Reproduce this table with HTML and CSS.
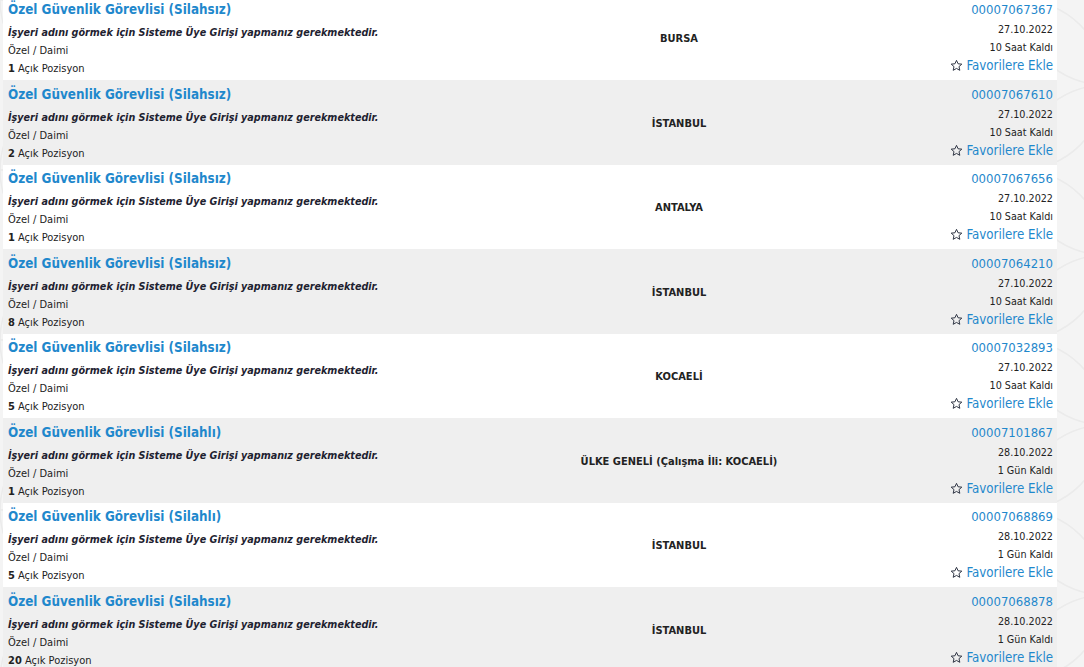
FILE: index.html
```html
<!DOCTYPE html>
<html lang="tr">
<head>
<meta charset="utf-8">
<title>İlanlar</title>
<link rel="stylesheet" href="styles.css">
</head>
<body>
<div class="list">
  <div class="row">
    <div class="info">
      <a class="title">Özel Güvenlik Görevlisi (Silahsız)</a>
      <div class="notice">İşyeri adını görmek için Sisteme Üye Girişi yapmanız gerekmektedir.</div>
      <div class="meta">Özel / Daimi</div>
      <div class="meta"><b>1</b> Açık Pozisyon</div>
    </div>
    <div class="city">BURSA</div>
    <div class="side">
      <a class="code">00007067367</a>
      <div class="small">27.10.2022</div>
      <div class="small">10 Saat Kaldı</div>
      <a class="fav"><svg class="star" viewBox="0 0 24 24"><path d="M12 2.5l2.9 6.3 6.9.7-5.2 4.6 1.5 6.8L12 17.4l-6.1 3.5 1.5-6.8-5.2-4.6 6.9-.7z"/></svg>Favorilere Ekle</a>
    </div>
  </div>
  <div class="row alt">
    <div class="info">
      <a class="title">Özel Güvenlik Görevlisi (Silahsız)</a>
      <div class="notice">İşyeri adını görmek için Sisteme Üye Girişi yapmanız gerekmektedir.</div>
      <div class="meta">Özel / Daimi</div>
      <div class="meta"><b>2</b> Açık Pozisyon</div>
    </div>
    <div class="city">İSTANBUL</div>
    <div class="side">
      <a class="code">00007067610</a>
      <div class="small">27.10.2022</div>
      <div class="small">10 Saat Kaldı</div>
      <a class="fav"><svg class="star" viewBox="0 0 24 24"><path d="M12 2.5l2.9 6.3 6.9.7-5.2 4.6 1.5 6.8L12 17.4l-6.1 3.5 1.5-6.8-5.2-4.6 6.9-.7z"/></svg>Favorilere Ekle</a>
    </div>
  </div>
  <div class="row">
    <div class="info">
      <a class="title">Özel Güvenlik Görevlisi (Silahsız)</a>
      <div class="notice">İşyeri adını görmek için Sisteme Üye Girişi yapmanız gerekmektedir.</div>
      <div class="meta">Özel / Daimi</div>
      <div class="meta"><b>1</b> Açık Pozisyon</div>
    </div>
    <div class="city">ANTALYA</div>
    <div class="side">
      <a class="code">00007067656</a>
      <div class="small">27.10.2022</div>
      <div class="small">10 Saat Kaldı</div>
      <a class="fav"><svg class="star" viewBox="0 0 24 24"><path d="M12 2.5l2.9 6.3 6.9.7-5.2 4.6 1.5 6.8L12 17.4l-6.1 3.5 1.5-6.8-5.2-4.6 6.9-.7z"/></svg>Favorilere Ekle</a>
    </div>
  </div>
  <div class="row alt">
    <div class="info">
      <a class="title">Özel Güvenlik Görevlisi (Silahsız)</a>
      <div class="notice">İşyeri adını görmek için Sisteme Üye Girişi yapmanız gerekmektedir.</div>
      <div class="meta">Özel / Daimi</div>
      <div class="meta"><b>8</b> Açık Pozisyon</div>
    </div>
    <div class="city">İSTANBUL</div>
    <div class="side">
      <a class="code">00007064210</a>
      <div class="small">27.10.2022</div>
      <div class="small">10 Saat Kaldı</div>
      <a class="fav"><svg class="star" viewBox="0 0 24 24"><path d="M12 2.5l2.9 6.3 6.9.7-5.2 4.6 1.5 6.8L12 17.4l-6.1 3.5 1.5-6.8-5.2-4.6 6.9-.7z"/></svg>Favorilere Ekle</a>
    </div>
  </div>
  <div class="row">
    <div class="info">
      <a class="title">Özel Güvenlik Görevlisi (Silahsız)</a>
      <div class="notice">İşyeri adını görmek için Sisteme Üye Girişi yapmanız gerekmektedir.</div>
      <div class="meta">Özel / Daimi</div>
      <div class="meta"><b>5</b> Açık Pozisyon</div>
    </div>
    <div class="city">KOCAELİ</div>
    <div class="side">
      <a class="code">00007032893</a>
      <div class="small">27.10.2022</div>
      <div class="small">10 Saat Kaldı</div>
      <a class="fav"><svg class="star" viewBox="0 0 24 24"><path d="M12 2.5l2.9 6.3 6.9.7-5.2 4.6 1.5 6.8L12 17.4l-6.1 3.5 1.5-6.8-5.2-4.6 6.9-.7z"/></svg>Favorilere Ekle</a>
    </div>
  </div>
  <div class="row alt">
    <div class="info">
      <a class="title">Özel Güvenlik Görevlisi (Silahlı)</a>
      <div class="notice">İşyeri adını görmek için Sisteme Üye Girişi yapmanız gerekmektedir.</div>
      <div class="meta">Özel / Daimi</div>
      <div class="meta"><b>1</b> Açık Pozisyon</div>
    </div>
    <div class="city">ÜLKE GENELİ (Çalışma İli: KOCAELİ)</div>
    <div class="side">
      <a class="code">00007101867</a>
      <div class="small">28.10.2022</div>
      <div class="small">1 Gün Kaldı</div>
      <a class="fav"><svg class="star" viewBox="0 0 24 24"><path d="M12 2.5l2.9 6.3 6.9.7-5.2 4.6 1.5 6.8L12 17.4l-6.1 3.5 1.5-6.8-5.2-4.6 6.9-.7z"/></svg>Favorilere Ekle</a>
    </div>
  </div>
  <div class="row">
    <div class="info">
      <a class="title">Özel Güvenlik Görevlisi (Silahlı)</a>
      <div class="notice">İşyeri adını görmek için Sisteme Üye Girişi yapmanız gerekmektedir.</div>
      <div class="meta">Özel / Daimi</div>
      <div class="meta"><b>5</b> Açık Pozisyon</div>
    </div>
    <div class="city">İSTANBUL</div>
    <div class="side">
      <a class="code">00007068869</a>
      <div class="small">28.10.2022</div>
      <div class="small">1 Gün Kaldı</div>
      <a class="fav"><svg class="star" viewBox="0 0 24 24"><path d="M12 2.5l2.9 6.3 6.9.7-5.2 4.6 1.5 6.8L12 17.4l-6.1 3.5 1.5-6.8-5.2-4.6 6.9-.7z"/></svg>Favorilere Ekle</a>
    </div>
  </div>
  <div class="row alt">
    <div class="info">
      <a class="title">Özel Güvenlik Görevlisi (Silahsız)</a>
      <div class="notice">İşyeri adını görmek için Sisteme Üye Girişi yapmanız gerekmektedir.</div>
      <div class="meta">Özel / Daimi</div>
      <div class="meta"><b>20</b> Açık Pozisyon</div>
    </div>
    <div class="city">İSTANBUL</div>
    <div class="side">
      <a class="code">00007068878</a>
      <div class="small">28.10.2022</div>
      <div class="small">1 Gün Kaldı</div>
      <a class="fav"><svg class="star" viewBox="0 0 24 24"><path d="M12 2.5l2.9 6.3 6.9.7-5.2 4.6 1.5 6.8L12 17.4l-6.1 3.5 1.5-6.8-5.2-4.6 6.9-.7z"/></svg>Favorilere Ekle</a>
    </div>
  </div>
</div>
</body>
</html>
```

FILE: styles.css
```css
html, body {
  margin: 0;
  padding: 0;
}
body {
  background-color: #f4f4f4;
  background-image: url("data:image/svg+xml;utf8,<svg xmlns='http://www.w3.org/2000/svg' width='170' height='170'><g fill='none' stroke='%23ebebeb' stroke-width='1.5'><circle cx='0' cy='85' r='85'/><circle cx='170' cy='85' r='85'/><circle cx='85' cy='0' r='85'/><circle cx='85' cy='170' r='85'/></g></svg>");
  font-family: "DejaVu Sans Condensed", "DejaVu Sans", sans-serif;
  color: #222;
  overflow: hidden;
}
.list {
  margin: -4.5px 0 0 3px;
  width: 1054px;
}
.row {
  display: grid;
  grid-template-columns: 519px 304px 1fr;
  height: 84.5px;
  box-sizing: border-box;
  padding: 4.5px 4px 0 5px;
  background: #fff;
}
.row.alt {
  background: #efefef;
}
.info {
  display: flex;
  flex-direction: column;
}
.title {
  font-size: 13.35px;
  font-weight: bold;
  line-height: 20px;
  color: #1f88cc;
  margin-bottom: 4px;
  white-space: nowrap;
}
.notice {
  font-size: 10.7px;
  font-weight: bold;
  font-style: italic;
  line-height: 18px;
  color: #1e2230;
  white-space: nowrap;
}
.meta {
  font-size: 11px;
  line-height: 18px;
  color: #222;
}
.meta b {
  font-weight: bold;
}
.city {
  display: flex;
  align-items: center;
  justify-content: center;
  font-size: 11px;
  font-weight: bold;
  color: #222;
  padding-bottom: 3px;
  white-space: nowrap;
}
.side {
  display: flex;
  flex-direction: column;
  align-items: flex-end;
}
.code {
  font-size: 13px;
  line-height: 20px;
  color: #1f88cc;
  margin-bottom: 1px;
}
.small {
  font-size: 10.7px;
  line-height: 18px;
  color: #222;
}
.fav {
  display: flex;
  align-items: center;
  font-size: 13.2px;
  line-height: 17px;
  color: #1f88cc;
}
.star {
  width: 13px;
  height: 13px;
  margin-right: 3px;
  fill: none;
  stroke: #2a3040;
  stroke-width: 1.8;
  stroke-linejoin: round;
}
```
